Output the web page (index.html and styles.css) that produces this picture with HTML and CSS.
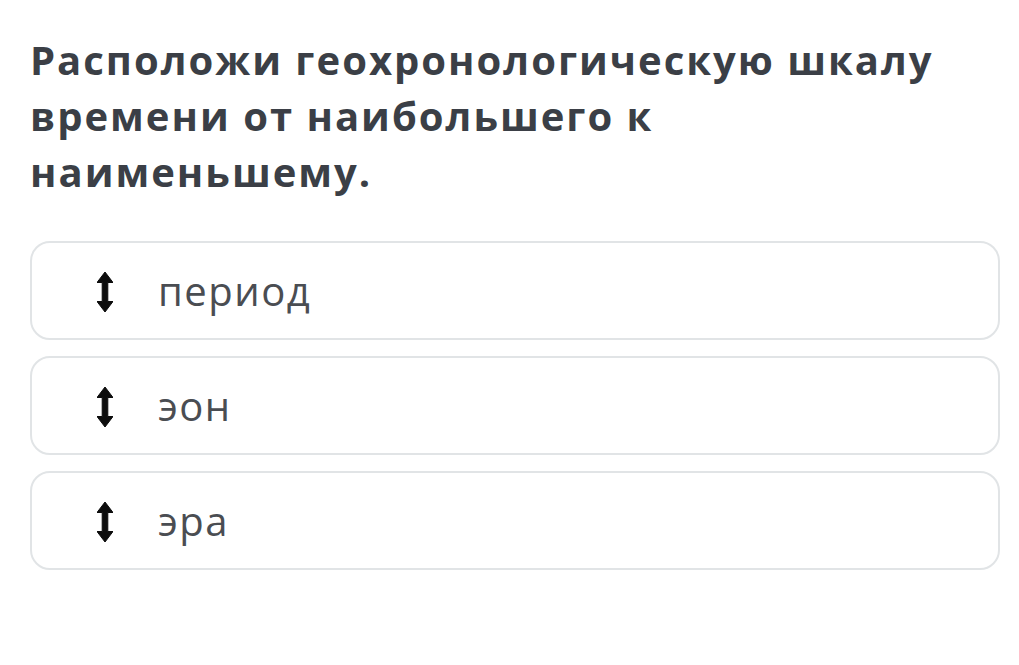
FILE: index.html
```html
<!DOCTYPE html>
<html lang="ru">
<head>
<meta charset="utf-8">
<title>Порядок</title>
<link rel="stylesheet" href="styles.css">
</head>
<body>
<main class="page">
  <h1 class="question">Расположи геохронологическую шкалу времени от наибольшего к наименьшему.</h1>
  <ul class="options">
    <li class="option">
      <svg class="handle" viewBox="0 0 16 40" width="16" height="40"><path d="M8 0 L16 10.5 L10.8 10.5 L10.8 29.5 L16 29.5 L8 40 L0 29.5 L5.2 29.5 L5.2 10.5 L0 10.5 Z" fill="#0d0d0d" stroke="#0d0d0d" stroke-width="1" stroke-linejoin="round"/></svg>
      <span class="label">период</span>
    </li>
    <li class="option">
      <svg class="handle" viewBox="0 0 16 40" width="16" height="40"><path d="M8 0 L16 10.5 L10.8 10.5 L10.8 29.5 L16 29.5 L8 40 L0 29.5 L5.2 29.5 L5.2 10.5 L0 10.5 Z" fill="#0d0d0d" stroke="#0d0d0d" stroke-width="1" stroke-linejoin="round"/></svg>
      <span class="label">эон</span>
    </li>
    <li class="option">
      <svg class="handle" viewBox="0 0 16 40" width="16" height="40"><path d="M8 0 L16 10.5 L10.8 10.5 L10.8 29.5 L16 29.5 L8 40 L0 29.5 L5.2 29.5 L5.2 10.5 L0 10.5 Z" fill="#0d0d0d" stroke="#0d0d0d" stroke-width="1" stroke-linejoin="round"/></svg>
      <span class="label">эра</span>
    </li>
  </ul>
</main>
</body>
</html>
```
FILE: styles.css
```css
* { box-sizing: border-box; }
html, body { margin: 0; padding: 0; background: #ffffff; }
body { font-family: "Open Sans", "Noto Sans", sans-serif; }
.page { padding: 32px 19px 0 30px; }
.question {
  margin: 0;
  font-size: 40px;
  line-height: 56px;
  font-weight: 700;
  color: #3b3f46;
  letter-spacing: 2px;
  max-width: 945px;
}
.options {
  list-style: none;
  margin: 41px 0 0 0;
  padding: 0;
  display: flex;
  flex-direction: column;
  gap: 16px;
}
.option {
  height: 99px;
  border: 2px solid #e1e4e6;
  border-radius: 20px;
  display: flex;
  align-items: center;
  padding-left: 65px;
}
.handle { flex: none; margin-top: 2px; }
.label {
  margin-left: 45px;
  font-size: 40px;
  letter-spacing: 1.5px;
  color: #4a4d52;
  line-height: 1;
}
```
